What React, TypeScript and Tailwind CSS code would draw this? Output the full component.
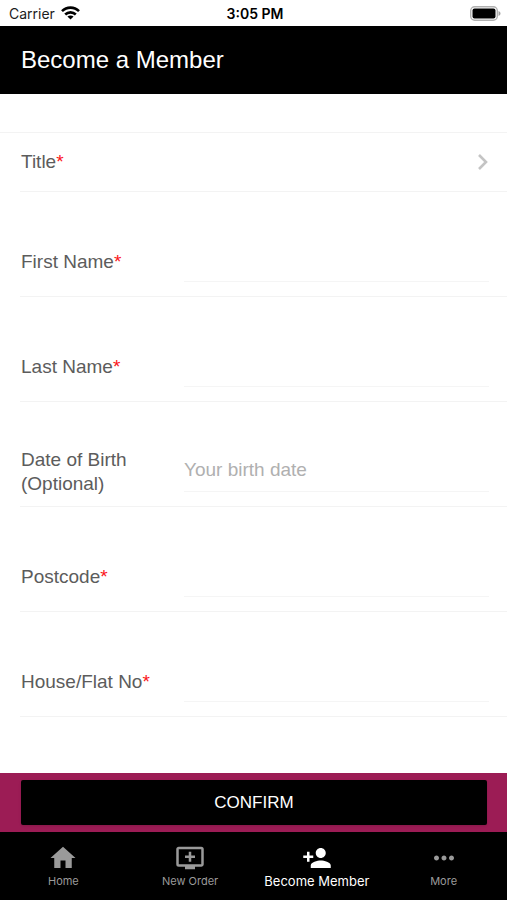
import React from 'react';
import { MdHome, MdAddToQueue, MdPersonAdd, MdMoreHoriz } from 'react-icons/md';
import type { IconType } from 'react-icons';

interface Field {
  id: string;
  label: string;
  required?: boolean;
  placeholder?: string;
}

interface Tab {
  label: string;
  icon: IconType;
  active?: boolean;
}

const fields: Field[] = [
  { id: 'first-name', label: 'First Name', required: true },
  { id: 'last-name', label: 'Last Name', required: true },
  { id: 'birth-date', label: 'Date of Birth (Optional)', placeholder: 'Your birth date' },
  { id: 'postcode', label: 'Postcode', required: true },
  { id: 'house-no', label: 'House/Flat No', required: true },
];

const tabs: Tab[] = [
  { label: 'Home', icon: MdHome },
  { label: 'New Order', icon: MdAddToQueue },
  { label: 'Become Member', icon: MdPersonAdd, active: true },
  { label: 'More', icon: MdMoreHoriz },
];

const Required: React.FC = () => <span className="text-[#fb1419]">*</span>;

const StatusBar: React.FC = () => (
  <div className="grid h-[26px] grid-cols-3 items-center bg-white pr-1.5 pl-[9px] font-['Inter',sans-serif] text-[14px] text-[#1c1c1c]">
    <div className="flex items-center gap-1.5">
      <span>Carrier</span>
      <svg className="h-[14px] w-[19px]" viewBox="0 0 19 14" fill="none" stroke="#000" strokeWidth="2.6" aria-hidden="true">
        <path d="M1 5.2C5.8.4 13.2.4 18 5.2" />
        <path d="M4.2 8.5c3-2.9 7.6-2.9 10.6 0" />
        <path d="M9.5 13.6 6.4 10.6c1.7-1.6 4.5-1.6 6.2 0z" fill="#000" stroke="none" />
      </svg>
    </div>
    <span className="text-center font-semibold text-black">3:05 PM</span>
    <svg className="h-[15px] w-[31px] justify-self-end" viewBox="0 0 31 15" aria-hidden="true">
      <rect x="0.7" y="0.7" width="26.6" height="13.6" rx="4" fill="#fff" stroke="#b0b0b0" strokeWidth="1.4" />
      <rect x="2.5" y="2.5" width="23" height="10" rx="2" fill="#000" />
      <path d="M28.5 5v5c1.2-.4 2-1.3 2-2.5s-.8-2.1-2-2.5z" fill="#a0a0a0" />
    </svg>
  </div>
);

const FieldRow: React.FC<Field> = ({ id, label, required, placeholder }) => (
  <div className="ml-5 grid grid-cols-[163px_1fr] items-center border-b border-[#f3f3f3] pt-[46px] pr-[18px] pb-2.5 pl-px">
    <label htmlFor={id} className="flex min-h-12 items-center pr-6 leading-6">
      <span>
        {label}
        {required && <Required />}
      </span>
    </label>
    <input
      id={id}
      type="text"
      required={required}
      placeholder={placeholder}
      className="h-11 w-full min-w-0 self-start border-b border-[#f5f5f5] bg-transparent outline-none placeholder:text-[#b0b0b0]"
    />
  </div>
);

const App: React.FC = () => {
  return (
    <div className="flex min-h-screen flex-col bg-white font-['Liberation_Sans',Arial,sans-serif] text-[19px] text-[#5c5c5c]">
      <StatusBar />

      <header className="flex h-[68px] items-center bg-black px-[21px]">
        <h1 className="text-[24px] text-white">Become a Member</h1>
      </header>

      <form id="member-form" className="flex-1 pt-[38px] pb-12">
        <div className="border-t border-[#f3f3f3]">
          {/* Title opens a picker */}
          <button
            type="button"
            className="flex h-[59px] w-full items-center justify-between pl-5 text-left"
          >
            <span className="flex h-full flex-1 items-center justify-between border-b border-[#f3f3f3] pr-[18px] pl-px">
              <span>
                Title
                <Required />
              </span>
              <svg className="h-[18px] w-3" viewBox="0 0 12 18" fill="none" stroke="#c4c4c4" strokeWidth="2.6" aria-hidden="true">
                <path d="M2 2l7 7-7 7" />
              </svg>
            </span>
          </button>
          {fields.map((field) => (
            <FieldRow key={field.id} {...field} />
          ))}
        </div>
      </form>

      <div className="bg-[#9c1c55] py-[7px] pr-5 pl-[21px]">
        <button
          type="submit"
          form="member-form"
          className="h-[45px] w-full rounded-xs bg-black text-[17px] text-white shadow-sm"
        >
          CONFIRM
        </button>
      </div>

      <nav className="grid h-[68px] grid-cols-4 bg-black font-['Inter',sans-serif]">
        {tabs.map(({ label, icon: Icon, active }) => (
          <a
            key={label}
            href="#"
            aria-current={active ? 'page' : undefined}
            className={
              active
                ? 'flex flex-col items-center pt-[11px] text-[13px] text-white'
                : 'flex flex-col items-center pt-[11px] text-[11px] text-[#9a9a9a]'
            }
          >
            <Icon className="size-[30px]" aria-hidden="true" />
            <span className="leading-4 whitespace-nowrap">{label}</span>
          </a>
        ))}
      </nav>
    </div>
  );
};

export default App;
